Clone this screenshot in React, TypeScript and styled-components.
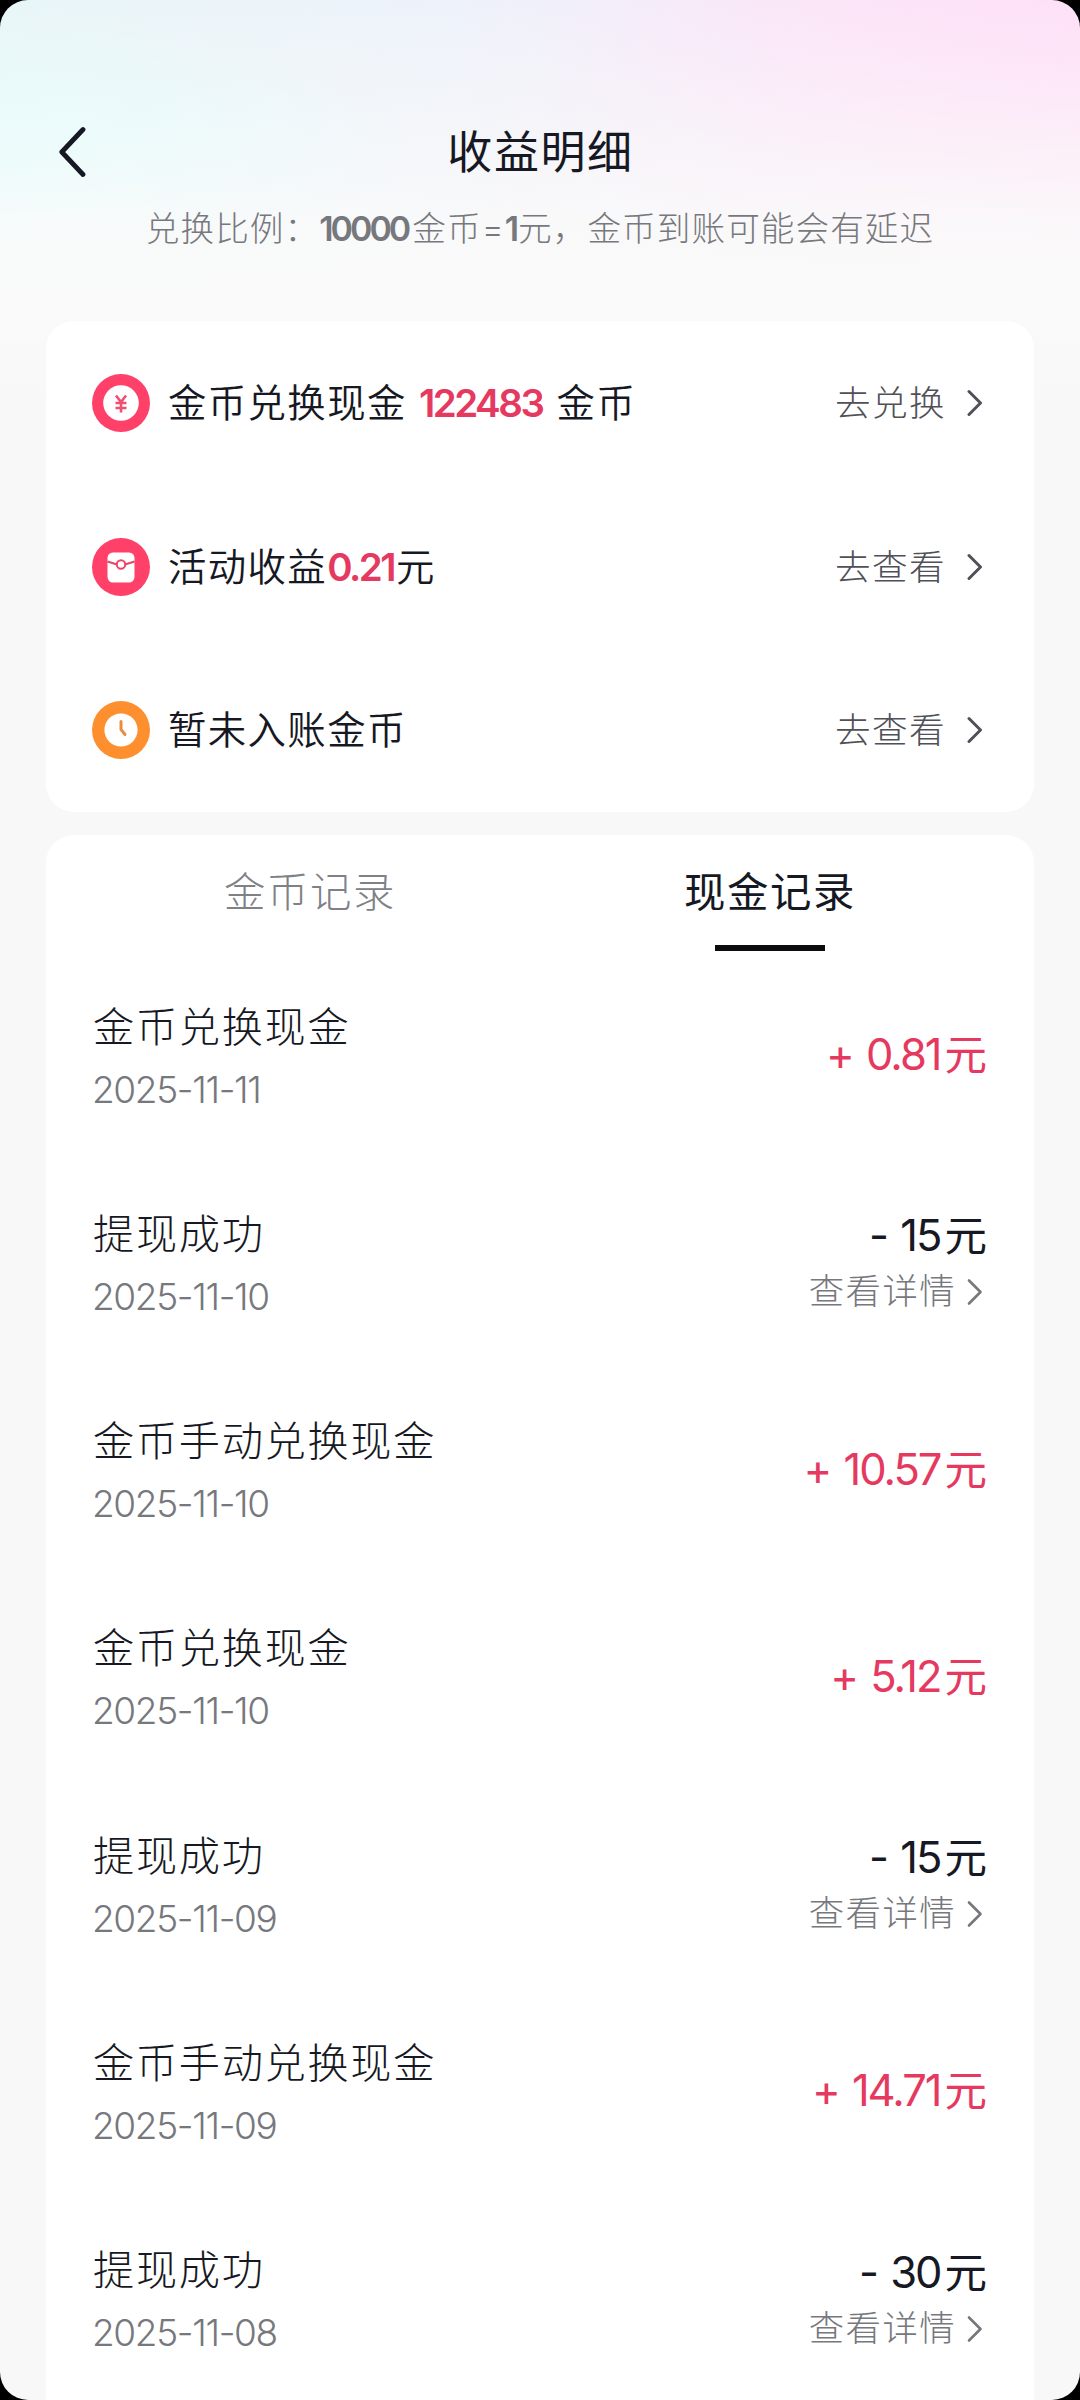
import React from "react";
import styled, { createGlobalStyle } from "styled-components";

const cjk = `"Noto Sans CJK SC", sans-serif`;

const Global = createGlobalStyle`
  html, body { margin: 0; background: #000; }
  * { box-sizing: border-box; }
`;

const Screen = styled.main`
  width: 1080px;
  height: 2400px;
  overflow: hidden;
  border-radius: 28px;
  display: flex;
  flex-direction: column;
  font-family: Inter, ${cjk};
  color: #161823;
  background:
    linear-gradient(to bottom, rgba(250, 250, 250, 0) 0, rgba(250, 250, 250, 0.45) 120px, rgba(250, 250, 250, 0.9) 225px, #fafafa 300px, #f8f8f8 400px),
    radial-gradient(ellipse 520px 280px at 1060px 80px, rgba(255, 222, 247, 0.8) 0, rgba(255, 223, 247, 0) 100%),
    radial-gradient(ellipse 440px 170px at 0 190px, #d8ffff 0, rgba(216, 255, 255, 0) 100%),
    linear-gradient(to right, #e8f6f8 0, #eef2fa 42%, #f7ebf9 70%, #fde4f7 100%);
`;

const Header = styled.header`
  height: 321px;
  padding-top: 116px;
  display: flex;
  flex-direction: column;
  flex-shrink: 0;
`;

const NavBar = styled.div`
  height: 70px;
  padding: 0 60px 0 59px;
  display: grid;
  grid-template-columns: 27px 1fr 26px;
  align-items: center;
`;

const Title = styled.h1`
  margin: 0;
  padding: 2px 0 0 1px;
  text-align: center;
  font-size: 45px;
  letter-spacing: 1.6px;
  line-height: 70px;
  font-weight: 400;
`;

const Ratio = styled.p`
  margin: 18px 0 0;
  height: 50px;
  line-height: 50px;
  display: flex;
  justify-content: center;
  font-size: 33.6px;
  letter-spacing: 1.1px;
  font-weight: 300;
  color: #77787d;
`;

const Strong = styled.b<{ $gap?: number }>`
  font-weight: 600;
  font-size: 34px;
  letter-spacing: -3px;
  margin: 0 ${(p) => p.$gap ?? 2}px 0 0;
  padding-right: 2px;
`;

const Card = styled.section`
  width: 988px;
  margin: 0 auto;
  background: #fff;
  border-radius: 28px;
  flex-shrink: 0;
`;

const EntryRow = styled.div`
  height: 163.7px;
  padding: 0 51px 0 46px;
  display: flex;
  align-items: center;
`;

const EntryText = styled.div`
  margin-left: 18px;
  flex: 1;
  font-size: 38.4px;
  letter-spacing: 1.4px;
  line-height: 60px;
  font-weight: 350;
  white-space: pre;
`;

const Hot = styled.span`
  color: #e5395f;
  font-weight: 600;
  font-size: 38.5px;
  letter-spacing: -2.5px;
  margin-right: 2px;
`;

const Action = styled.div`
  display: flex;
  align-items: center;
  gap: 21px;
  font-size: 35.6px;
  letter-spacing: 1.4px;
  line-height: 56px;
  font-weight: 300;
  color: #505158;
`;

const ActionLabel = styled.span`
  padding-top: 2px;
`;

const Records = styled(Card)`
  margin-top: 23px;
  border-radius: 28px 28px 0 0;
`;

const Tabs = styled.nav`
  height: 119px;
  padding: 0 34px;
  display: grid;
  grid-template-columns: 1fr 1fr;
`;

const Tab = styled.div<{ $active?: boolean }>`
  padding-top: 25px;
  display: flex;
  flex-direction: column;
  align-items: center;
  gap: 20px;
  font-size: 41.4px;
  letter-spacing: 1.6px;
  line-height: 65px;
  font-weight: ${(p) => (p.$active ? 400 : 300)};
  color: ${(p) => (p.$active ? "#161823" : "#808186")};
`;

const Indicator = styled.i`
  width: 110px;
  height: 6px;
  background: #0c0c0e;
`;

const Record = styled.article`
  height: 207.25px;
  padding: 0 47px 0 46px;
  display: flex;
  align-items: center;
  justify-content: space-between;
`;

const Info = styled.div`
  display: flex;
  flex-direction: column;
`;

const Name = styled.div`
  padding: 2px 0 0 1px;
  font-size: 41.2px;
  letter-spacing: 1.7px;
  line-height: 61px;
  font-weight: 300;
`;

const DateText = styled.div`
  font-size: 37px;
  line-height: 63px;
  font-weight: 300;
  letter-spacing: -1.35px;
  color: #77787d;
`;

const Side = styled.div`
  margin-bottom: 6px;
  display: flex;
  flex-direction: column;
  align-items: flex-end;
`;

const Amount = styled.div<{ $income?: boolean }>`
  font-size: 43.5px;
  line-height: 60px;
  white-space: pre;
  font-weight: 400;
  letter-spacing: -2px;
  word-spacing: 3px;
  color: ${(p) => (p.$income ? "#e5395f" : "#161823")};
`;

const Unit = styled.span`
  font-size: 42.5px;
  letter-spacing: 0;
  margin-left: 4px;
`;

const Detail = styled.div`
  height: 52px;
  padding-right: 4px;
  display: flex;
  align-items: center;
  gap: 11px;
  font-size: 35.4px;
  letter-spacing: 1.4px;
  line-height: 52px;
  font-weight: 300;
  color: #77787d;
`;

const Chevron = ({ color, weight }: { color: string; weight: number }) => (
  <svg width="16" height="28" viewBox="0 0 16 28" fill="none" stroke={color} strokeWidth={weight}>
    <path d="M2 2.5 13.5 14 2 25.5" strokeLinecap="round" strokeLinejoin="round" />
  </svg>
);

const BackIcon = () => (
  <svg width="27" height="52" viewBox="0 0 27 52" fill="none" stroke="#161823" strokeWidth="4.8">
    <path d="M24 3.5 2.8 26 24 48.5" strokeLinecap="round" strokeLinejoin="round" />
  </svg>
);

const CoinIcon = () => (
  <svg width="58" height="58" viewBox="0 0 58 58" fill="none">
    <circle cx="29" cy="29" r="29" fill="#ff4068" />
    <circle cx="29" cy="29" r="17.8" fill="#fff" />
    <path d="M24 21.5 29 28l5-6.5M29 28v10.5M23.5 29h11M23.5 34h11" stroke="#ef4f72" strokeWidth="2.6" />
  </svg>
);

const PacketIcon = () => (
  <svg width="58" height="58" viewBox="0 0 58 58" fill="none">
    <circle cx="29" cy="29" r="29" fill="#ff4068" />
    <rect x="15.5" y="14.5" width="27" height="30" rx="5.5" fill="#fff" />
    <path d="M15.5 23.5 25 26.5M42.5 23.5 33 26.5" stroke="#e8456a" strokeWidth="2" />
    <circle cx="29" cy="26.5" r="4.2" fill="#fff" stroke="#ee4469" strokeWidth="2" />
  </svg>
);

const ClockIcon = () => (
  <svg width="58" height="58" viewBox="0 0 58 58" fill="none">
    <circle cx="29" cy="29" r="29" fill="#fe8f2f" />
    <circle cx="29" cy="29" r="16.6" fill="#fff" />
    <path d="M29 20.5V28.5L33 33.5" stroke="#e98d3e" strokeWidth="3" strokeLinecap="round" strokeLinejoin="round" />
  </svg>
);

type Item = { name: string; date: string; amount: string; income?: boolean };

const items: Item[] = [
  { name: "金币兑换现金", date: "2025-11-11", amount: "+ 0.81", income: true },
  { name: "提现成功", date: "2025-11-10", amount: "- 15" },
  { name: "金币手动兑换现金", date: "2025-11-10", amount: "+ 10.57", income: true },
  { name: "金币兑换现金", date: "2025-11-10", amount: "+ 5.12", income: true },
  { name: "提现成功", date: "2025-11-09", amount: "- 15" },
  { name: "金币手动兑换现金", date: "2025-11-09", amount: "+ 14.71", income: true },
  { name: "提现成功", date: "2025-11-08", amount: "- 30" },
];

const Go = ({ children }: { children: React.ReactNode }) => (
  <Action>
    <ActionLabel>{children}</ActionLabel>
    <Chevron color="#505158" weight={3} />
  </Action>
);

export default function App() {
  return (
    <>
      <Global />
      <Screen>
        <Header>
          <NavBar>
            <BackIcon />
            <Title>收益明细</Title>
          </NavBar>
          <Ratio>
            兑换比例：<Strong>10000</Strong>金币=<Strong $gap={0}>1</Strong>元，金币到账可能会有延迟
          </Ratio>
        </Header>
        <Card>
          <EntryRow>
            <CoinIcon />
            <EntryText>
              金币兑换现金 <Hot>122483</Hot> 金币
            </EntryText>
            <Go>去兑换</Go>
          </EntryRow>
          <EntryRow>
            <PacketIcon />
            <EntryText>
              活动收益<Hot>0.21</Hot>元
            </EntryText>
            <Go>去查看</Go>
          </EntryRow>
          <EntryRow>
            <ClockIcon />
            <EntryText>暂未入账金币</EntryText>
            <Go>去查看</Go>
          </EntryRow>
        </Card>
        <Records>
          <Tabs>
            <Tab>金币记录</Tab>
            <Tab $active>
              现金记录
              <Indicator />
            </Tab>
          </Tabs>
          {items.map((it, i) => (
            <Record key={i}>
              <Info>
                <Name>{it.name}</Name>
                <DateText>{it.date}</DateText>
              </Info>
              <Side>
                <Amount $income={it.income}>
                  {it.amount}
                  <Unit>元</Unit>
                </Amount>
                {!it.income && (
                  <Detail>
                    查看详情
                    <Chevron color="#77787d" weight={2.6} />
                  </Detail>
                )}
              </Side>
            </Record>
          ))}
        </Records>
      </Screen>
    </>
  );
}
